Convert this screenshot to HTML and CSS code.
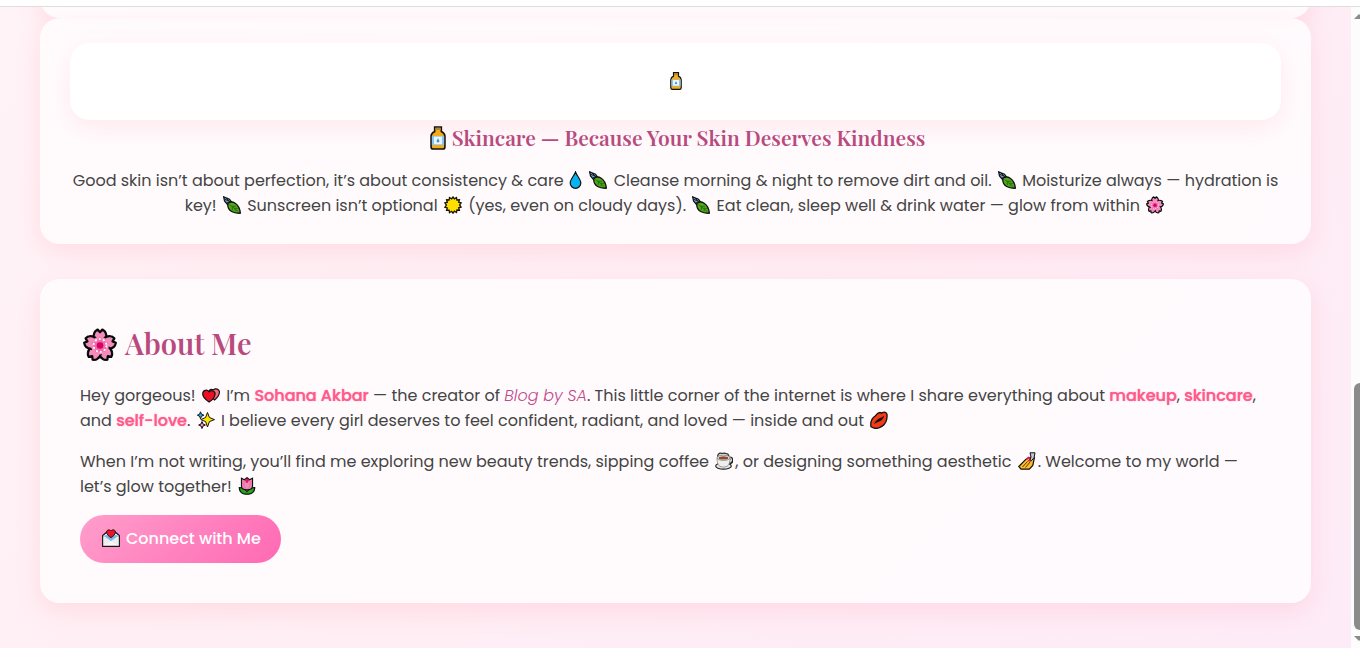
FILE: index.html
```
<!DOCTYPE html>
<html lang="en">
<head>
<meta charset="utf-8">
<title>Blog by SA</title>
<link rel="stylesheet" href="styles.css">
</head>
<body>
<svg class="sprite" aria-hidden="true">
  <symbol id="bottle" viewBox="0 0 18 18"><path d="M6.500.7h5v3.400c1.800.9 2.700 2 2.700 3.600v8c0 1-.6 1.600-1.600 1.600H5.400c-1 0-1.600-.6-1.600-1.600v-8c0-1.600.9-2.700 2.700-3.600z" fill="#f5aa18" stroke="#111" stroke-width="1.200"/><path d="M7 1.300h4v1.700H7z" fill="#a98735"/><path d="M4.400 7.500h9.200v6.800H4.400z" fill="#8ac5f2"/><path d="M6 8h6v5.700H6z" fill="#e9f5ff"/><path d="M9 9.200 7.900 11.200a1.100 1.100 0 0 0 2.200 0z" fill="#458fc9"/></symbol>
  <symbol id="drop" viewBox="1.500 0 15 18"><path d="M9 1C8 4.500 3.700 8.200 3.700 12a5.300 5.300 0 0 0 10.600 0C14.300 8.200 10 4.500 9 1z" fill="#08b4f0" stroke="#111" stroke-width="1.200"/></symbol>
  <symbol id="leaf" viewBox="0 0 18 18"><path d="M.6.8 6.500 3.300 9 6.500 4.800 9 1.500 5z" fill="#6c9fc4" stroke="#111" stroke-width="1.200"/><path d="m1 3 5 2M2 1l5 5M4 7l4-2" stroke="#16202a" fill="none"/><path d="M4.800 7.500c4-3.500 11.500-.5 12.600 9.700-6 .3-13.200-1.500-12.600-9.700z" fill="#58a51b" stroke="#111" stroke-width="1.300"/><path d="m6.500 8.500 8.800 7M9 10.300h4M11.400 12.300h3.700M9.300 10.600v3.500M12.300 13.300l-.3 2" stroke="#17710c" fill="none" stroke-width=".9"/></symbol>
  <symbol id="sun" viewBox="0 0 18 18"><path d="m9 1 1.400 1.900L12.500 1.500l.4 2.500 2.500-.2-.7 2.400 2.400.7-1.500 2.100 1.500 2.100-2.400.7.700 2.400-2.500-.2-.4 2.500-2.100-1.400L9 17.200l-1.400-1.900-2.100 1.400-.4-2.500-2.500.2.700-2.400-2.400-.7L2.400 9 .9 6.900l2.400-.7-.7-2.400 2.500.2.400-2.500 2.100 1.400z" fill="#ffdf00" stroke="#171400" stroke-width="1.300"/></symbol>
  <symbol id="flower" viewBox="0 0 36 36"><g fill="#f48bbd" stroke="#090909" stroke-width="2.400" stroke-linejoin="round"><path d="M18 18.500C12 15 10 9 12 5c.7-1.600 2-2.500 3.500-3.300L18 4.500l2.500-2.800C22 2.500 23.300 3.400 24 5c2 4 0 10-6 13.500z"/><path d="M18 18.500C12 15 10 9 12 5c.7-1.600 2-2.500 3.500-3.300L18 4.500l2.500-2.800C22 2.500 23.300 3.400 24 5c2 4 0 10-6 13.500z" transform="rotate(72 18 18.500)"/><path d="M18 18.500C12 15 10 9 12 5c.7-1.600 2-2.500 3.500-3.300L18 4.500l2.500-2.800C22 2.500 23.300 3.400 24 5c2 4 0 10-6 13.500z" transform="rotate(144 18 18.500)"/><path d="M18 18.500C12 15 10 9 12 5c.7-1.600 2-2.500 3.500-3.300L18 4.500l2.500-2.800C22 2.500 23.300 3.400 24 5c2 4 0 10-6 13.500z" transform="rotate(216 18 18.500)"/><path d="M18 18.500C12 15 10 9 12 5c.7-1.600 2-2.500 3.500-3.300L18 4.500l2.500-2.800C22 2.500 23.300 3.400 24 5c2 4 0 10-6 13.500z" transform="rotate(288 18 18.500)"/></g><circle cx="18" cy="18.500" r="9.500" fill="#f48bbd"/><path d="M18 10v5M26 16l-5 1.500M23 25.500l-3-4M13 25.500l3-4M10 16l5 1.500" stroke="#e2407f"/><circle cx="18" cy="18.500" r="6.800" fill="#f06ba7" stroke="#fff" stroke-width="1.900" stroke-dasharray="1.900 2.400"/><circle cx="18" cy="18.500" r="3.500" fill="#d80067"/></symbol>
  <symbol id="hearts" viewBox="0 0 18 18"><path d="M12.500 14 7 7.800c-1-2.900 1.300-5.600 4.400-4 1.900-2 6.400-.7 6 2.700-.2 2.900-2.600 5.600-4.900 7.500z" fill="#f16c7d" stroke="#171111" stroke-width="1.200"/><path d="M7.100 16C4 13.800.7 11 .7 7.900c0-3.900 4.500-5 6.300-2.100 2.400-2.500 6.600-.7 6 2.700-.4 2.700-3 5.700-5.900 7.500z" fill="#ed1025" stroke="#111" stroke-width="1.200"/></symbol>
  <symbol id="spark" viewBox="0 0 18 18"><g stroke="#111" stroke-width="1"><path d="m10.500 1.500 1.900 5 5.100 2.100-5.100 2-1.900 5.400-1.900-5.400-4.800-2 4.800-2.100z" fill="#ffe600"/><path d="m3.500.8 1 2.500 2.400.9-2.400 1-1 2.500-1-2.500-2.100-1 2.100-.9z" fill="#22b7ef"/><path d="m5 10.500 1 2.500 2.400 1L6 15l-1 2.500L4 15l-2.300-1L4 13z" fill="#f48abd"/></g></symbol>
  <symbol id="lips" viewBox="0 0 18 18"><path d="M1 15.800C.2 11 1.800 7 5.500 4.700 7.400 2 9.700.7 11.700 2.100c2.600-1.600 5-.9 5.300 1.300.4 4.300-1.300 9.200-4.800 11.700C8.500 17.700 4.200 18 1 15.800z" fill="#f23a16" stroke="#111" stroke-width="1.300"/><path d="M4 13c1.700-3 3.500-5 6-5.900 2-.6 2.900-1.600 4.200-2.300-.8 2.500-2.500 4.700-4.500 5.500-2.200.8-3.600 1.800-5.700 2.700z" fill="#16100d"/></symbol>
  <symbol id="coffee" viewBox="0 0 18 18"><path d="M3 5c-1-2 1-3.500 2-4 2 1 4-.5 6 .5 2.500 0 2.500 1.500 3 2.500" fill="#ddd" stroke="#222" stroke-width="1.200"/><ellipse cx="8.500" cy="14" rx="7.800" ry="3.200" fill="#e8e8e8" stroke="#222" stroke-width="1.200"/><path d="M14 6c4-1.200 4.700 5 .2 5" fill="none" stroke="#222" stroke-width="2.800"/><path d="M14 6c3-.6 3.300 4 .2 4" fill="none" stroke="#eee" stroke-width="1.200"/><path d="M2 6c0 8 3 9 6.500 9s6.500-1 6.500-9z" fill="#eee" stroke="#777" stroke-width=".7"/><ellipse cx="8.500" cy="5.800" rx="6.400" ry="2.600" fill="#f8f8f8" stroke="#555" stroke-width=".6"/><ellipse cx="8.500" cy="5.900" rx="4.900" ry="1.600" fill="#8d4b2c"/></symbol>
  <symbol id="nails" viewBox="0 0 18 18"><path d="m.8 14.500 7-7.200c2-2.100 4.500-1.700 7.600-2.800l1 1.400-1.600 7.500-3.500 3.800H3z" fill="#ffbd25" stroke="#111" stroke-width="1.200"/><path d="m4.500 15 5-5.500M7.500 15.500l5-6" stroke="#231804" stroke-width=".8"/><path d="m8.500 7.500 2-2 2 1-2 3M13 8.500l2-3" stroke="#d9156c" stroke-width="1.500" fill="none"/><path d="m12 .8 5 0-1 5-2.700 3-1.300-1 1-3z" fill="#c5cbd0" stroke="#111"/></symbol>
  <symbol id="tulip" viewBox="0 0 18 18"><path d="M9 17C4.500 18 1 14.500 1.300 10.500c3 .1 5.200.8 7.700 4 2.500-3.200 4.700-3.900 7.700-4C17 14.500 13.500 18 9 17z" fill="#27a51b" stroke="#111" stroke-width="1.200"/><path d="m3.500 1.300 2.900 1.500L9 .7l2.600 2.100 2.900-1.500v8c0 2.400-2.500 3.500-5.500 3.500s-5.500-1.100-5.500-3.500z" fill="#f38bba" stroke="#111" stroke-width="1.200"/><path d="m6.800 3 2.200-1.400L11.200 3 9.500 6h-1z" fill="#dd1764"/><path d="M6 4v4.500c0 1.500 1 2.600 2.200 2.800M12 4v4.500c0 1.500-1 2.600-2.200 2.800" stroke="#e5609a" stroke-width=".8" fill="none"/></symbol>
  <symbol id="mail" viewBox="0 0 18 18"><path d="M.7 6.500 5 3h8l4.300 3.500v10.800H.7z" fill="#f8f8f8" stroke="#161616" stroke-width="1.300"/><path d="m1.300 6.700 7.700 5.500 7.700-5.500L9 5z" fill="#7db9ed"/><path d="M9 12.200 1.500 16.700V8zM9 12.200l7.500 4.500V8z" fill="#eee"/><path d="M9 8.700C6.300 7 4.400 5 4.600 2.900 4.800.6 7.700.2 9 2c1.300-1.800 4.200-1.400 4.400.9C13.600 5 11.700 7 9 8.700z" fill="#eb1428" stroke="#241515"/></symbol>
</svg>

<div class="topbar"></div>
<div class="window">
  <main class="page">
    <div class="card card-previous"></div>
    <article class="card post">
      <div class="thumb"><svg class="emoji" role="img" aria-label="lotion bottle"><use href="#bottle"/></svg></div>
      <h3><svg class="emoji emoji-mid" role="img" aria-label="lotion bottle"><use href="#bottle"/></svg>Skincare — Because Your Skin Deserves Kindness</h3>
      <p>Good skin isn’t about perfection, it’s about consistency &amp; care <svg class="emoji emoji-narrow" role="img" aria-label="droplet"><use href="#drop"/></svg> <svg class="emoji" role="img" aria-label="leaf"><use href="#leaf"/></svg> Cleanse morning &amp; night to remove dirt and oil. <svg class="emoji" role="img" aria-label="leaf"><use href="#leaf"/></svg> Moisturize always — hydration is key! <svg class="emoji" role="img" aria-label="leaf"><use href="#leaf"/></svg> Sunscreen isn’t optional <svg class="emoji" role="img" aria-label="sun"><use href="#sun"/></svg> (yes, even on cloudy days). <svg class="emoji" role="img" aria-label="leaf"><use href="#leaf"/></svg> Eat clean, sleep well &amp; drink water — glow from within <svg class="emoji" role="img" aria-label="blossom"><use href="#flower"/></svg></p>
    </article>

    <section class="card about">
      <h2><svg class="emoji emoji-large" role="img" aria-label="blossom"><use href="#flower"/></svg>About Me</h2>
      <p>Hey gorgeous! <svg class="emoji" role="img" aria-label="hearts"><use href="#hearts"/></svg> I’m <strong>Sohana Akbar</strong> — the creator of <em>Blog by SA</em>. This little corner of the internet is where I share everything about <strong>makeup</strong>, <strong>skincare</strong>, and <strong>self-love</strong>. <svg class="emoji" role="img" aria-label="sparkles"><use href="#spark"/></svg> I believe every girl deserves to feel confident, radiant, and loved — inside and out <svg class="emoji" role="img" aria-label="kiss"><use href="#lips"/></svg></p>
      <p>When I’m not writing, you’ll find me exploring new beauty trends, sipping coffee <svg class="emoji" role="img" aria-label="coffee"><use href="#coffee"/></svg>, or designing something aesthetic <svg class="emoji" role="img" aria-label="nail polish"><use href="#nails"/></svg>. Welcome to my world — let’s glow together! <svg class="emoji" role="img" aria-label="tulip"><use href="#tulip"/></svg></p>
      <a class="button" href="#connect"><svg class="emoji" role="img" aria-label="love letter"><use href="#mail"/></svg>Connect with Me</a>
    </section>
  </main>
  <div class="scrollbar" aria-hidden="true">
    <span class="arrow arrow-up"></span>
    <span class="handle"></span>
    <span class="arrow arrow-down"></span>
  </div>
</div>
</body>
</html>
```

FILE: styles.css
```
* { box-sizing: border-box; }
body {
  margin: 0;
  height: 100vh;
  display: flex;
  flex-direction: column;
  overflow: hidden;
  color: #444;
  background: #fff;
  font: 16px/25px Poppins, Inter, "Noto Sans", sans-serif;
}
.sprite { display: none; }
.topbar {
  flex: none;
  height: 7px;
  background: #fff;
  border-bottom: 1px solid #dedede;
}
.window { flex: 1; min-height: 0; display: flex; }
.page {
  flex: 1;
  min-width: 0;
  overflow: hidden;
  padding: 0 40px 45px;
  background: linear-gradient(135deg, #fff3f7, #ffeef4 50%, #fdebf7);
}
.card {
  border-radius: 20px;
  background: rgba(255, 253, 254, .85);
  box-shadow: 0 8px 25px rgba(255, 105, 135, .15);
}
.card-previous {
  height: 61px;
  margin-top: -50px;
}
.post {
  padding: 25px 30px 26px;
  margin-bottom: 35px;
  text-align: center;
}
.thumb {
  padding: 26px;
  border-radius: 20px;
  background: #fff;
  box-shadow: 0 8px 25px rgba(255, 105, 135, .12);
}
h2, h3 {
  margin: 0;
  color: #b84a7d;
  font-family: "Playfair Display", "Liberation Serif", serif;
  font-weight: 600;
}
h3 { font-size: 21px; line-height: 34px; margin-bottom: 14px; }
h2 { font-size: 29px; line-height: 48px; margin-bottom: 16px; }
p { margin: 0; }
.about { padding: 40px; }
.about p { margin-bottom: 16px; }
strong { color: #ff5c8d; font-weight: 500; text-shadow: 0 0 1px #ff5c8d; }
em { color: #c24a8c; font-weight: 300; }
.emoji {
  width: 18px;
  height: 18px;
  margin: 0 2px;
  vertical-align: -3px;
}
.emoji-narrow { width: 15px; margin: 0; }
.emoji-mid { width: 24px; height: 24px; margin: 0 2px 0 0; vertical-align: -4px; }
.emoji-large { width: 34px; height: 34px; margin: 0 8px 0 3px; vertical-align: -7px; }
.button {
  display: inline-flex;
  align-items: center;
  height: 48px;
  padding: 0 20px 2px;
  gap: 4px;
  border-radius: 24px;
  color: #fff;
  font-weight: 500;
  text-decoration: none;
  background: linear-gradient(135deg, #ff9ecb, #ff69b4);
}
.scrollbar {
  flex: none;
  width: 9px;
  padding: 7px 0 7px 3px;
  display: flex;
  flex-direction: column;
  align-items: flex-start;
  overflow: hidden;
  background: #fcfcfc;
}
.arrow { border: 5px solid transparent; border-top-width: 0; border-bottom-width: 0; }
.arrow-up { border-bottom: 5px solid #8b8b8b; }
.arrow-down { border-top: 5px solid #8b8b8b; }
.handle {
  width: 12px;
  height: 247px;
  margin-top: auto;
  margin-bottom: 6px;
  border-radius: 6px;
  background: #8b8b8b;
}
```
